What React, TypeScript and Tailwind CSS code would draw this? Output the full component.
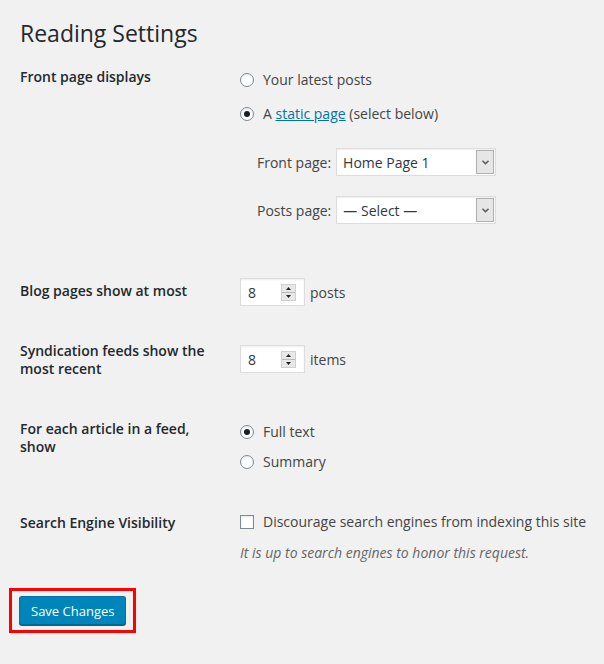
import React from "react";

const Radio = ({ checked }: { checked?: boolean }) => (
  <span className="inline-flex items-center justify-center w-[14px] h-[14px] rounded-full border border-[#7e8993] bg-white shadow-[inset_0_1px_2px_rgba(0,0,0,0.1)] shrink-0">
    {checked && <span className="block w-[6px] h-[6px] rounded-full bg-[#1e1e1e]" />}
  </span>
);

const SelectBox = ({ value }: { value: string }) => (
  <div className="flex items-stretch w-[160px] h-[28px] bg-white border border-[#dddddd] shadow-[inset_0_1px_2px_rgba(0,0,0,0.07)]">
    <div className="flex-1 flex items-center pl-[6px] text-[14px] text-[#32373c]">{value}</div>
    <div className="w-[18px] m-px flex items-center justify-center bg-[#e6e6e6] border border-[#b0b0b0]">
      <svg width="7" height="5" viewBox="0 0 7 5">
        <path d="M0.5 0.8 L3.5 3.8 L6.5 0.8" stroke="#555" strokeWidth="1.4" fill="none" />
      </svg>
    </div>
  </div>
);

const NumberBox = ({ value }: { value: string }) => (
  <div className="flex items-center w-[65px] h-[28px] bg-white border border-[#dddddd] shadow-[inset_0_1px_2px_rgba(0,0,0,0.07)]">
    <div className="flex-1 pl-[7px] text-[14px] text-[#32373c]">{value}</div>
    <div className="w-[15px] h-[17px] mr-[8px] flex flex-col bg-[#e8e8e8] border border-[#cfcfcf]">
      <div className="flex-1 flex items-center justify-center border-b border-[#b8b8b8]">
        <svg width="5" height="3" viewBox="0 0 5 3"><path d="M0 3 L2.5 0 L5 3Z" fill="#222" /></svg>
      </div>
      <div className="flex-1 flex items-center justify-center">
        <svg width="5" height="3" viewBox="0 0 5 3"><path d="M0 0 L2.5 3 L5 0Z" fill="#222" /></svg>
      </div>
    </div>
  </div>
);

const Label = ({ children }: { children: React.ReactNode }) => (
  <div className="w-[200px] mr-[20px] shrink-0 text-[14px] leading-[18px] font-semibold text-[#23282d]">{children}</div>
);

export default function App() {
  return (
    <div
      className="w-[604px] h-[664px] bg-[#f1f1f1] px-[20px] text-[14px] leading-[19px] text-[#444444] overflow-hidden"
      style={{ fontFamily: '"Open Sans", "Liberation Sans", sans-serif' }}
    >
      <h1 className="pt-[19px] text-[23px] leading-[29px] font-normal text-[#23282d]">Reading Settings</h1>

      {/* Front page displays */}
      <div className="flex mt-[19px]">
        <div className="pt-[1px]">
          <Label>Front page displays</Label>
        </div>
        <div className="pt-[3px]">
          <div className="flex items-center gap-[9px]">
            <Radio />
            <span>Your latest posts</span>
          </div>
          <div className="flex items-center gap-[9px] mt-[15px]">
            <Radio checked />
            <span>
              A <a className="text-[#0073aa] underline">static page</a> (select below)
            </span>
          </div>
          <div className="ml-[17px] mt-[25px] flex flex-col gap-[20px]">
            <div className="flex items-center">
              <span className="mr-[5px]">Front page:</span>
              <SelectBox value="Home Page 1" />
            </div>
            <div className="flex items-center">
              <span className="mr-[5px]">Posts page:</span>
              <SelectBox value="— Select —" />
            </div>
          </div>
        </div>
      </div>

      {/* Blog pages */}
      <div className="flex mt-[54px]">
        <div className="pt-[4px]">
          <Label>Blog pages show at most</Label>
        </div>
        <div className="flex items-center gap-[5px]">
          <NumberBox value="8" />
          <span>posts</span>
        </div>
      </div>

      {/* Syndication */}
      <div className="flex mt-[35px]">
        <div className="pt-[1px]">
          <Label>Syndication feeds show the most recent</Label>
        </div>
        <div className="flex items-center gap-[5px] mt-[4px] self-start">
          <NumberBox value="8" />
          <span>items</span>
        </div>
      </div>

      {/* Feed article */}
      <div className="flex mt-[42px]">
        <Label>For each article in a feed, show</Label>
        <div className="pt-[2px]">
          <div className="flex items-center gap-[9px]">
            <Radio checked />
            <span>Full text</span>
          </div>
          <div className="flex items-center gap-[9px] mt-[11px]">
            <Radio />
            <span>Summary</span>
          </div>
        </div>
      </div>

      {/* Search engine */}
      <div className="flex mt-[41px]">
        <div className="pt-[2px]">
          <Label>Search Engine Visibility</Label>
        </div>
        <div>
          <div className="flex items-center gap-[9px] whitespace-nowrap">
            <span className="block w-[14px] h-[14px] border border-[#7e8993] bg-white shadow-[inset_0_1px_2px_rgba(0,0,0,0.1)]" />
            <span>Discourage search engines from indexing this site</span>
          </div>
          <p className="mt-[12px] italic text-[#666666] whitespace-nowrap">It is up to search engines to honor this request.</p>
        </div>
      </div>

      <div className="mt-[26px] ml-[-11px] inline-block border-[3px] border-[#ff0000] px-[7px] py-[5px]">
        <button className="h-[29px] px-[11px] rounded-[3px] bg-[#0085ba] border border-[#0073aa] border-b-[#006799] shadow-[0_1px_0_#006799] text-[13px] leading-[26px] text-white">
          Save Changes
        </button>
      </div>
    </div>
  );
}
